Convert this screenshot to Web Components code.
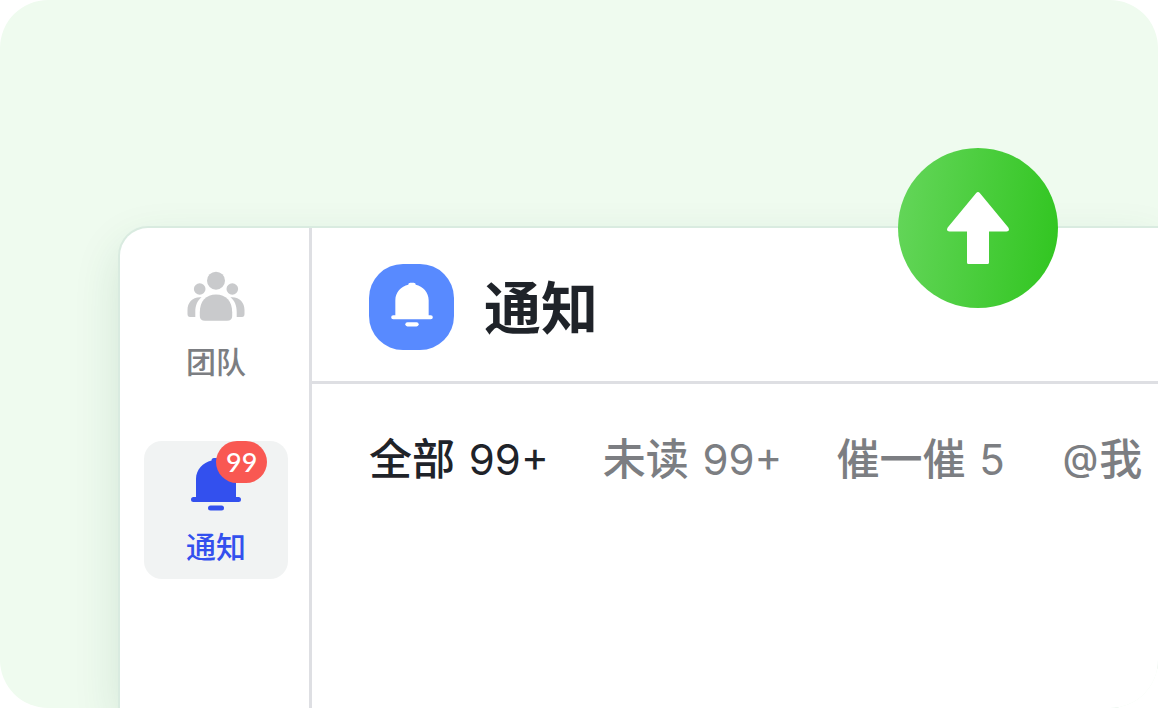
<!DOCTYPE html>
<html lang="zh-CN">
<head>
<meta charset="utf-8">
<meta name="viewport" content="width=device-width, initial-scale=1">
<title>通知</title>
<style>
  body { margin: 0; background: #fff; font-family: Inter, "Noto Sans CJK SC", sans-serif; color: #1f2329; }
</style>
</head>
<body>
<app-stage>
  <app-window>
    <nav-rail slot="rail">
      <nav-item label="团队"><icon-team></icon-team></nav-item>
      <nav-item label="通知" badge="99" active><icon-bell></icon-bell></nav-item>
    </nav-rail>
    <page-header heading="通知"><icon-bell></icon-bell></page-header>
    <filter-tabs>
      <filter-tab count="99+" active>全部</filter-tab>
      <filter-tab count="99+">未读</filter-tab>
      <filter-tab count="5">催一催</filter-tab>
      <filter-tab prefix="@">我</filter-tab>
    </filter-tabs>
    <scroll-up slot="float"></scroll-up>
  </app-window>
</app-stage>

<script>
  const define = (name, html, setup) => {
    const template = document.createElement('template');
    template.innerHTML = html;
    customElements.define(name, class extends HTMLElement {
      constructor() {
        super();
        this.attachShadow({ mode: 'open' }).append(template.content.cloneNode(true));
      }
      connectedCallback() {
        if (setup) setup(this, this.shadowRoot);
      }
    });
  };

  define('app-stage', `
    <style>
      :host { display: flex; box-sizing: border-box; min-height: 100vh; padding: 228px 0 0 120px; overflow: hidden; background: #effbef; border-radius: 48px; }
      ::slotted(*) { flex: 1; }
    </style>
    <slot></slot>`);

  define('app-window', `
    <style>
      :host { display: flex; position: relative; min-width: 0; background: #fff; border-radius: 28px 0 0 0;
        box-shadow: 0 0 0 2px #d9ebe0, 0 18px 48px rgba(31, 90, 60, .14); }
      main { flex: 1; min-width: 0; overflow: hidden; }
      .float { position: absolute; top: -80px; right: 100px; }
    </style>
    <slot name="rail"></slot>
    <main><slot></slot></main>
    <div class="float"><slot name="float"></slot></div>`);

  define('nav-rail', `
    <style>
      :host { display: block; flex: none; border-right: 3px solid #dedfe3; }
      nav { display: flex; flex-direction: column; gap: 47px; padding: 28px 21px 0 24px; }
    </style>
    <nav><slot></slot></nav>`);

  define('nav-item', `
    <style>
      :host { display: block; }
      a { display: flex; flex-direction: column; align-items: center; gap: 6px; box-sizing: border-box; position: relative;
        width: 144px; padding: 12px 0 10px; border-radius: 18px; color: #7c7e82; font-size: 30px; font-weight: 500; line-height: 44px; text-decoration: none; }
      ::slotted(*) { width: 60px; height: 66px; }
      :host(:not([active])) ::slotted(*) { color: #c9cacc; }
      :host([active]) a { background: #f1f3f3; color: #3350ee; }
      .badge { position: absolute; top: 0; left: 72px; padding: 0 10px; border-radius: 21px; background: #f95852; color: #fff;
        font-family: Lato, sans-serif; font-size: 27px; line-height: 42px; }
      .badge:empty { display: none; }
    </style>
    <a href="#"><slot></slot><span class="label"></span><span class="badge"></span></a>`,
    (host, root) => {
      root.querySelector('.label').textContent = host.getAttribute('label');
      root.querySelector('.badge').textContent = host.getAttribute('badge') || '';
      if (host.hasAttribute('active')) root.querySelector('a').setAttribute('aria-current', 'page');
    });

  define('page-header', `
    <style>
      :host { display: block; }
      header { display: flex; align-items: center; gap: 30px; padding: 36px 57px 31px; border-bottom: 3px solid #dedfe3; }
      .tile { display: flex; align-items: center; justify-content: center; width: 85px; height: 86px; border-radius: 34px; background: #588aff; color: #fff; }
      ::slotted(*) { width: 50px; height: 56px; padding-bottom: 2px; }
      h1 { margin: 0; padding-top: 4px; font-size: 57px; line-height: 82px; font-weight: 600; }
    </style>
    <header><span class="tile"><slot></slot></span><h1></h1></header>`,
    (host, root) => { root.querySelector('h1').textContent = host.getAttribute('heading'); });

  define('filter-tabs', `
    <style>
      :host { display: flex; gap: 54px; padding: 43px 0 0 57px; }
      ::slotted(*) { flex: none; }
    </style>
    <slot></slot>`);

  define('filter-tab', `
    <style>
      :host { display: block; }
      button { padding: 0; border: 0; background: none; color: #7c7e82; font: inherit; font-size: 43px; font-weight: 500; line-height: 64px; white-space: nowrap; cursor: pointer; }
      :host([active]) button { color: #1f2329; }
      .count { padding-left: 2px; font-size: 42px; font-weight: 400; }
      .prefix { padding: 0 1px 0 4px; font-size: 36px; font-feature-settings: "case"; }
      span:empty { display: none; }
    </style>
    <button type="button"><span class="prefix"></span><slot></slot><span class="count"></span></button>`,
    (host, root) => {
      const count = host.getAttribute('count');
      root.querySelector('.prefix').textContent = host.getAttribute('prefix') || '';
      root.querySelector('.count').textContent = count ? ' ' + count : '';
    });

  define('scroll-up', `
    <style>
      :host { display: block; }
      button { display: block; width: 160px; height: 160px; padding: 0; border: 0; border-radius: 50%; background: linear-gradient(97deg, #65d65b, #30c51f); cursor: pointer; }
      svg { display: block; }
    </style>
    <button type="button" aria-label="向上">
      <svg viewBox="0 0 160 160" width="160" height="160"><path fill="#fff" d="M78.200 44.900Q80 43.200 81.800 44.900L110.300 79.500Q112.300 83.500 108.500 83.500H91V114.500Q91 116 89.500 116H70.500Q69 116 69 114.500V83.500H51.500Q47.700 83.500 49.700 79.500Z"/></svg>
    </button>`);

  define('icon-bell', `
    <style>:host { display: block; } svg { display: block; width: 100%; height: 100%; }</style>
    <svg viewBox="0 0 60 66" fill="currentColor" aria-hidden="true">
      <path d="M25.500 7.500Q25.500 5 28 5H32Q34.500 5 34.500 7.500C43 9.500 50 16.500 50 26V44H52.500A2.500 2.500 0 0 1 52.500 49H7.500A2.500 2.500 0 0 1 7.500 44H10V26C10 16.500 17 9.500 25.500 7.500Z"/>
      <rect x="22" y="52.500" width="16" height="5" rx="2.500"/>
    </svg>`);

  define('icon-team', `
    <style>:host { display: block; } svg { display: block; width: 100%; height: 100%; }</style>
    <svg viewBox="0 0 60 66" fill="currentColor" aria-hidden="true">
      <circle cx="30" cy="12.700" r="9"/>
      <circle cx="13.700" cy="21" r="5.800"/>
      <circle cx="46.300" cy="21" r="5.800"/>
      <path d="M13.800 44.500C13.800 33 20 26.500 30 26.500S46.200 33 46.200 44.500V48Q46.200 52.800 41 52.800H19Q13.800 52.800 13.800 48Z"/>
      <path d="M15.600 29.300C11.500 32.500 9.300 37.500 9.300 44V49H4Q1.500 49 1.500 46V42C1.500 34.500 6.500 28.500 15.600 29.300Z"/>
      <path d="M44.400 29.300C48.500 32.500 50.700 37.500 50.700 44V49H56Q58.500 49 58.500 46V42C58.500 34.500 53.500 28.500 44.400 29.300Z"/>
    </svg>`);
</script>
</body>
</html>
